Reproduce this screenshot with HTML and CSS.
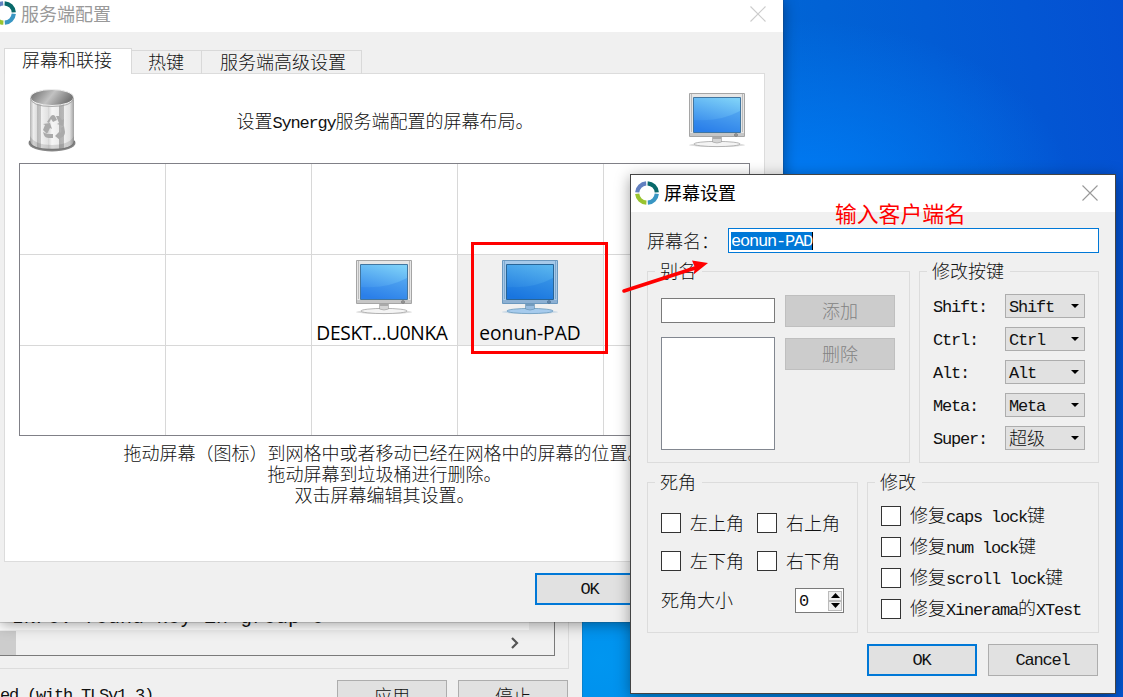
FILE: index.html
```html
<!DOCTYPE html>
<html lang="zh-CN">
<head>
<meta charset="utf-8">
<title>屏幕设置</title>
<link rel="stylesheet" href="styles.css">
</head>
<body>
<svg class="defs" width="0" height="0" aria-hidden="true">
  <defs>
    <linearGradient id="glass" x1="0.75" y1="0" x2="0.4" y2="1"><stop offset="0" stop-color="#7dd0f8"/><stop offset="1" stop-color="#2e82ea"/></linearGradient>
    <linearGradient id="glassSel" x1="0.75" y1="0" x2="0.4" y2="1"><stop offset="0" stop-color="#58b4ee"/><stop offset="1" stop-color="#1c78e0"/></linearGradient>
    <linearGradient id="can" x1="0" x2="1" y1="0" y2="0">
      <stop offset="0" stop-color="#b2b2b2"/><stop offset=".08" stop-color="#ededed"/><stop offset=".16" stop-color="#dcdcdc"/><stop offset=".17" stop-color="#b9b9b9"/><stop offset=".24" stop-color="#c4c4c4"/><stop offset=".25" stop-color="#f2f2f2"/><stop offset=".4" stop-color="#e2e2e2"/><stop offset=".41" stop-color="#d4d4d4"/><stop offset=".5" stop-color="#f6f6f6"/><stop offset=".66" stop-color="#ececec"/><stop offset=".67" stop-color="#b0b0b0"/><stop offset=".77" stop-color="#b8b8b8"/><stop offset=".78" stop-color="#eee"/><stop offset=".9" stop-color="#e2e2e2"/><stop offset="1" stop-color="#a0a0a0"/>
    </linearGradient>
    <linearGradient id="rim" x1="0" x2="1" y1="0" y2="0.3"><stop offset="0" stop-color="#666"/><stop offset=".55" stop-color="#c2c2c2"/><stop offset="1" stop-color="#777"/></linearGradient>
    <symbol id="logo" viewBox="0 0 24 24">
      <g fill="none" stroke-width="4.2">
        <path d="M2.200 11.400A9.800 9.800 0 0 1 11.200 2.300" stroke="#6280c0"/>
        <path d="M12.600 2.300A9.800 9.800 0 0 1 21.800 11.400" stroke="#08696a"/>
        <path d="M21.800 12.800A9.800 9.800 0 0 1 12.800 21.700" stroke="#3996c3"/>
        <path d="M11.400 21.700A9.800 9.800 0 0 1 2.200 12.800" stroke="#99c430"/>
      </g>
    </symbol>
    <symbol id="monitor" viewBox="0 0 56 56">
      <ellipse cx="28" cy="52" rx="28" ry="2" fill="#ddd"/>
      <ellipse cx="28" cy="51" rx="23" ry="2.600" fill="#f4f4f4" stroke="#a5a5a5" stroke-width=".8"/>
      <path d="M23.500 43h9v6q-4.500 2-9 0z" fill="#d5d5d5" stroke="#999" stroke-width=".6"/>
      <path d="M24 44h8v2h-8z" fill="#aaa"/>
      <path d="M.5.5h55v43H.5z" fill="#e6e6e6" stroke="#a5a5a5"/>
      <path d="M2.500 1v38M53.500 1v38" stroke="#bbb" fill="none"/>
      <path d="M1 40h54v3H1z" fill="#c6c6c6"/>
      <path d="M4.500 4.500h47v35h-47z" fill="url(#glass)" stroke="#4276a0"/>
      <path d="M5 27q26 2 46-9v21H5z" fill="#237be8" opacity=".3"/>
      <ellipse cx="47" cy="42" rx="1.600" ry="1.400" fill="#999" stroke="#666" stroke-width=".5"/>
    </symbol>
    <symbol id="monitorSelected" viewBox="0 0 56 56">
      <ellipse cx="28" cy="52" rx="28" ry="2" fill="#cfdce7"/>
      <ellipse cx="28" cy="51" rx="23" ry="2.600" fill="#a6cbed" stroke="#6899bd" stroke-width=".8"/>
      <path d="M23.500 43h9v6q-4.500 2-9 0z" fill="#96bbdf" stroke="#628fae" stroke-width=".6"/>
      <path d="M24 44h8v2h-8z" fill="#739bbd"/>
      <path d="M.5.5h55v43H.5z" fill="#a6c9e9" stroke="#6b98be"/>
      <path d="M2.500 1v38M53.500 1v38" stroke="#7da9cf" fill="none"/>
      <path d="M1 40h54v3H1z" fill="#8cb0d3"/>
      <path d="M4.500 4.500h47v35h-47z" fill="url(#glassSel)" stroke="#286597"/>
      <path d="M5 27q26 2 46-9v21H5z" fill="#1471df" opacity=".3"/>
      <ellipse cx="47" cy="42" rx="1.600" ry="1.400" fill="#668bb0" stroke="#426583" stroke-width=".5"/>
    </symbol>
  </defs>
</svg>

<main class="desktop">
  <section class="window log-window">
    <div class="log-group">
      <div class="log-box">
        <div class="log-text">INFO: found key in group 0</div>
        <div class="scrollbar"><span class="thumb"></span>
          <svg class="chevron" width="10" height="12" viewBox="0 0 10 12"><path d="M2 1l5 5-5 5" fill="none" stroke="#555" stroke-width="2.200"/></svg>
        </div>
      </div>
    </div>
    <div class="log-footer">
      <span class="status en">ted (with TLSv1.3)</span>
      <button class="btn">应用</button><button class="btn">停止</button>
    </div>
  </section>

  <section class="window config-window">
    <header class="config-title">
      <svg class="config-logo" width="24" height="24"><use href="#logo"/></svg>
      <span class="config-name">服务端配置</span>
      <svg width="16" height="16" viewBox="0 0 16 16"><path d="M.5.5l15 15m0-15l-15 15" stroke="#ccc" stroke-width="1.100"/></svg>
    </header>
    <nav class="tabs">
      <div class="tab active">屏幕和联接</div><div class="tab hotkeys">热键</div><div class="tab advanced">服务端高级设置</div>
    </nav>
    <div class="pane">
      <div class="toolbox">
        <svg width="48" height="64" viewBox="0 0 48 64">
          <ellipse cx="24" cy="55" rx="23.500" ry="8.500" fill="#888"/>
          <path d="M2 9v43q0 9 22 9t22-9V9z" fill="url(#can)"/>
          <path d="M2 48v4q0 9 22 9t22-9v-4q-5 9-22 9T2 48z" fill="#555" opacity=".18"/>
          <path d="M1.500 53q1 8.500 22.500 8.500T46.500 53" fill="none" stroke="#777" stroke-width="1.300"/>
          <ellipse cx="24" cy="9.500" rx="21.500" ry="8" fill="url(#rim)" stroke="#eee"/>
          <path d="M2.500 10q1 8.500 21.500 8.500T45.500 10" fill="none" stroke="#9b9b9b" stroke-width=".8"/>
          <g fill="#aaa"><path d="M19 34l4-6q2-2 4 0l2 4-4 2-2-3-2 4z"/><path d="M28 28h3l3 4 2-1-1 7-6-2 2-1z"/><path d="M15 36l7-1 2 6-2-1-3 6-4-4 2-5z"/><path d="M19 46h6v4h-4q-4 0-5-3l-1-3z"/><path d="M36 38l1 6q0 5-5 6v2l-5-4 5-5v2q2 0 1-5z"/></g>
        </svg>
        <p>设置<span class="en">Synergy</span>服务端配置的屏幕布局。</p>
        <svg width="56" height="56"><use href="#monitor"/></svg>
      </div>
      <div class="screens">
        <div class="cell"></div><div class="cell"></div><div class="cell"></div><div class="cell"></div><div class="cell"></div>
        <div class="cell"></div><div class="cell"></div>
        <div class="cell"><svg width="56" height="56"><use href="#monitor"/></svg><span class="desk-name">DESKT...U0NKA</span></div>
        <div class="cell picked"><svg width="56" height="56"><use href="#monitorSelected"/></svg><span>eonun-PAD</span></div>
        <div class="cell"></div>
        <div class="cell"></div><div class="cell"></div><div class="cell"></div><div class="cell"></div><div class="cell"></div>
      </div>
      <div class="hints">拖动屏幕（图标）到网格中或者移动已经在网格中的屏幕的位置。<br>拖动屏幕到垃圾桶进行删除。<br>双击屏幕编辑其设置。</div>
    </div>
    <footer class="config-footer"><button class="btn primary en">OK</button></footer>
  </section>

  <section class="window dialog">
    <header class="dialog-title">
      <svg width="24" height="24"><use href="#logo"/></svg>
      <span class="dialog-name">屏幕设置</span>
      <svg width="16" height="16" viewBox="0 0 16 16"><path d="M.5.5l15 15m0-15l-15 15" stroke="#999" stroke-width="1.100"/></svg>
    </header>
    <div class="dialog-body">
      <div class="name-row"><label>屏幕名：</label><div class="name-input"><span class="selection en">eonun-PAD</span></div></div>
      <div class="groups">
        <div class="group alias">
          <h2>别名</h2>
          <div class="alias-body">
            <div class="alias-fields"><div class="field"></div><div class="list"></div></div>
            <div class="alias-buttons"><button class="btn" disabled>添加</button><button class="btn" disabled>删除</button></div>
          </div>
        </div>
        <div class="group keys">
          <h2>修改按键</h2>
          <div class="key-grid">
            <span class="en">Shift:</span><div class="select"><span class="en">Shift</span></div>
            <span class="en">Ctrl:</span><div class="select"><span class="en">Ctrl</span></div>
            <span class="en">Alt:</span><div class="select"><span class="en">Alt</span></div>
            <span class="en">Meta:</span><div class="select"><span class="en">Meta</span></div>
            <span class="en">Super:</span><div class="select"><span class="cn">超级</span></div>
          </div>
        </div>
      </div>
      <div class="groups lower">
        <div class="group corners">
          <h2>死角</h2>
          <div class="corner-grid">
            <label class="check"><i></i><span>左上角</span></label><label class="check"><i></i><span>右上角</span></label>
            <label class="check"><i></i><span>左下角</span></label><label class="check"><i></i><span>右下角</span></label>
          </div>
          <div class="size-row"><span class="size-label">死角大小</span>
            <div class="spinner"><span class="en">0</span>
              <div class="steps"><b><svg width="9" height="5" viewBox="0 0 9 5"><path d="M0 5L4.500 0 9 5z"/></svg></b><b><svg width="9" height="5" viewBox="0 0 9 5"><path d="M0 0l4.500 5L9 0z"/></svg></b></div>
            </div>
          </div>
        </div>
        <div class="group fixes">
          <h2>修改</h2>
          <div class="fix-list">
            <label class="check"><i></i><span>修复<span class="en">caps lock</span>键</span></label>
            <label class="check"><i></i><span>修复<span class="en">num lock</span>键</span></label>
            <label class="check"><i></i><span>修复<span class="en">scroll lock</span>键</span></label>
            <label class="check"><i></i><span>修复<span class="en">Xinerama</span>的<span class="en">XTest</span></span></label>
          </div>
        </div>
      </div>
      <div class="dialog-actions"><button class="btn primary en">OK</button><button class="btn en">Cancel</button></div>
    </div>
  </section>

  <div class="mark-box"></div>
  <div class="mark-text">输入客户端名</div>
  <svg class="mark-arrow" width="92" height="36" viewBox="0 0 92 36"><path d="M5 32L76 9" stroke="red" stroke-width="3.600" stroke-linecap="round"/><path d="M89 4L73 1.500l3 7-1.500 7z" fill="red"/></svg>
</main>
</body>
</html>
```
FILE: styles.css
```css
* { box-sizing: border-box; }
body {
  margin: 0;
  font: 300 18px/20px "Noto Sans CJK SC", sans-serif;
  color: #111;
}
svg { display: block; flex: none; }
.defs { position: absolute; }
h2, p { margin: 0; font: inherit; }

.desktop {
  position: relative;
  width: 1123px;
  height: 697px;
  overflow: hidden;
  background:
    radial-gradient(circle at 600px 660px, #0096f0 0, rgba(0, 150, 240, 0) 420px),
    radial-gradient(ellipse 270px 170px at 800px 190px, #007bf4 0, rgba(0, 120, 240, 0) 100%),
    linear-gradient(80deg, #0068d6 68%, #0450d2 100%);
}
.window { position: absolute; background: #f0f0f0; }

.en {
  font-family: "Liberation Mono", monospace;
  font-size: 17px;
  font-weight: 400;
  letter-spacing: -1.2px;
  white-space: pre;
}

.btn {
  width: 110px;
  height: 32px;
  padding: 0 0 3px;
  border: 1px solid #adadad;
  background: #e1e1e1;
  color: #111;
  font-family: "Noto Sans CJK SC", sans-serif;
  font-size: 18px;
  font-weight: 300;
  line-height: 20px;
}
.btn.en { padding: 2px 1px 0 0; font-family: "Liberation Mono", monospace; font-size: 17px; font-weight: 400; }
.btn.primary { border: 2px solid #0078d7; }
.btn:disabled { border-color: #bfbfbf; background: #ccc; color: #838383; }

/* log window */
.log-window { left: 0; top: 600px; width: 582px; height: 97px; box-shadow: 0 0 1px #333; }
.log-group { width: 569px; height: 69px; border: solid #dcdcdc; border-width: 0 1px 1px 0; }
.log-box { width: 555px; height: 56px; border: solid #7a7a7a; border-width: 0 1px 1px 0; }
.log-text {
  width: 529px;
  height: 30px;
  padding: 7px 0 0 12px;
  background: #fff;
  font: 20px/22px "Liberation Mono", monospace;
  white-space: pre;
}
.scrollbar { display: flex; align-items: center; justify-content: space-between; height: 25px; padding-right: 34px; }
.thumb { width: 16px; height: 24px; background: #cdcdcd; }
.log-footer { display: flex; gap: 11px; padding-top: 11px; }
.status { width: 335px; margin-left: -9px; padding-top: 6px; }

/* server configuration window */
.config-window { left: 0; top: 0; width: 783px; height: 622px; box-shadow: 0 0 1px #333, 0 2px 14px rgba(0, 0, 0, .4); }
.config-title { display: flex; align-items: center; height: 32px; padding: 0 17px 4px 0; background: #fff; color: #999; }
.config-logo { margin-left: -8px; margin-top: -3px; }
.config-name { flex: 1; padding: 0 0 3px 5px; font-weight: 400; }
.tabs { display: flex; align-items: flex-end; padding: 16px 0 0 4px; height: 42px; position: relative; z-index: 1; }
.tab { height: 24px; border: 1px solid #d9d9d9; border-left: 0; border-bottom: 0; padding-top: 0; text-align: center; }
.tab.active { width: 128px; height: 26px; border-left: 1px solid #d9d9d9; background: #fff; padding: 0 2px 0 0; }
.tab.hotkeys { width: 70px; padding-right: 1px; }
.tab.advanced { width: 160px; padding-left: 3px; }
.pane { width: 761px; height: 489px; margin: -1px 0 0 4px; border: 1px solid #dcdcdc; background: #fff; padding: 0 14px; }
.toolbox { display: flex; justify-content: space-between; align-items: flex-start; height: 89px; padding: 14px 5px 0 9px; }
.toolbox p { margin-top: 22px; padding-left: 5px; }
.toolbox > svg:last-child { margin-top: 5px; }
.screens {
  display: grid;
  grid-template-columns: repeat(4, 146px) 145px;
  grid-template-rows: 91px 91px 89px;
  width: 731px;
  border: 1px solid #808087;
}
.cell {
  display: flex;
  flex-direction: column;
  align-items: center;
  padding: 5px 1px 0 0;
  border: solid #d8d8d8;
  border-width: 0 1px 1px 0;
  font: 19.200px/26px "Open Sans", sans-serif;
  color: #000;
}
.cell span { padding-top: 4px; white-space: nowrap; }
.cell .desk-name { margin-left: -4px; letter-spacing: -.35px; }
.cell:nth-child(5n) { border-right: 0; }
.cell:nth-child(n + 11) { border-bottom: 0; }
.picked { background: #f0f0f0; }
.hints { padding: 6px 0 0; line-height: 21px; text-align: center; }
.config-footer { padding: 11px 0 0 535px; }

/* screen settings dialog */
.dialog { left: 630px; top: 174px; width: 486px; height: 520px; border: 1px solid #444; box-shadow: 0 3px 14px rgba(0, 0, 0, .38); }
.dialog-title { display: flex; align-items: center; height: 37px; padding: 0 17px 1px 4px; background: #fff; color: #000; font-weight: 400; }
.dialog-name { flex: 1; padding: 0 0 2px 5px; }
.dialog-body { padding: 16px 16px 0 16px; }
.name-row { display: flex; align-items: center; height: 25px; }
.name-row label { width: 81px; padding-bottom: 2px; }
.name-input { flex: 1; display: flex; align-items: center; height: 25px; padding-left: 2px; border: 1px solid #0078d7; background: #fff; }
.selection { height: 18px; border-right: 1px solid #000; background: #0078d7; color: #fff; line-height: 20px; }
.groups { display: flex; gap: 9px; margin-top: 18px; height: 192px; }
.groups.lower { margin-top: 19px; height: 151px; }
.group { flex: none; border: 1px solid #dcdcdc; padding: 0 13px; }
.group h2 { width: max-content; height: 20px; margin: -12px 0 0 -6px; padding: 0 6px 0 5px; background: #f0f0f0; }
.alias { width: 263px; }
.keys { width: 180px; }
.alias-body { display: flex; gap: 10px; padding-top: 15px; }
.alias-fields { padding-top: 3px; }
.field { width: 114px; height: 25px; border: 1px solid #7a7a7a; background: #fff; }
.list { width: 114px; height: 113px; margin-top: 14px; border: 1px solid #828790; background: #fff; }
.alias-buttons { display: flex; flex-direction: column; gap: 11px; }
.key-grid { display: grid; grid-template-columns: 72px 80px; row-gap: 9px; align-items: center; padding-top: 14px; }
.key-grid .en { padding-top: 3px; }
.key-grid .cn { padding-bottom: 2px; }
.select { display: flex; align-items: center; justify-content: space-between; height: 24px; padding: 0 5px 0 3px; border: 1px solid #adadad; background: #e1e1e1; }
.select::after { content: ""; border: solid transparent; border-width: 4px 4px 0; border-top-color: #000; }
.corners { width: 211px; }
.fixes { width: 232px; }
.corner-grid { display: grid; grid-template-columns: 96px 90px; row-gap: 18px; padding-top: 22px; }
.corner-grid span, .size-label { padding-bottom: 3px; }
.check { display: flex; align-items: center; gap: 9px; height: 20px; white-space: nowrap; }
.check i { width: 20px; height: 20px; border: 1px solid #333; background: #fff; }
.size-row { display: flex; align-items: center; justify-content: space-between; padding-top: 17px; }
.spinner { display: flex; align-items: center; justify-content: space-between; width: 49px; height: 25px; padding: 0 1px 0 3px; border: 1px solid #7a7a7a; background: #fff; }
.spinner .en { padding-top: 2px; }
.steps { width: 14px; }
.steps b { display: flex; align-items: center; justify-content: center; height: 10px; border: 1px solid #bbb; background: #eee; }
.fix-list { display: flex; flex-direction: column; gap: 11px; padding-top: 15px; }
.dialog-actions { display: flex; justify-content: flex-end; gap: 11px; padding: 11px 1px 0 0; }

/* annotations drawn over the windows */
.mark-box { position: absolute; left: 471px; top: 242px; width: 137px; height: 112px; border: 3px solid red; }
.mark-text { position: absolute; left: 835px; top: 199px; color: red; font-size: 21.800px; font-weight: 400; line-height: 28px; white-space: nowrap; }
.mark-arrow { position: absolute; left: 619px; top: 259px; }
```
